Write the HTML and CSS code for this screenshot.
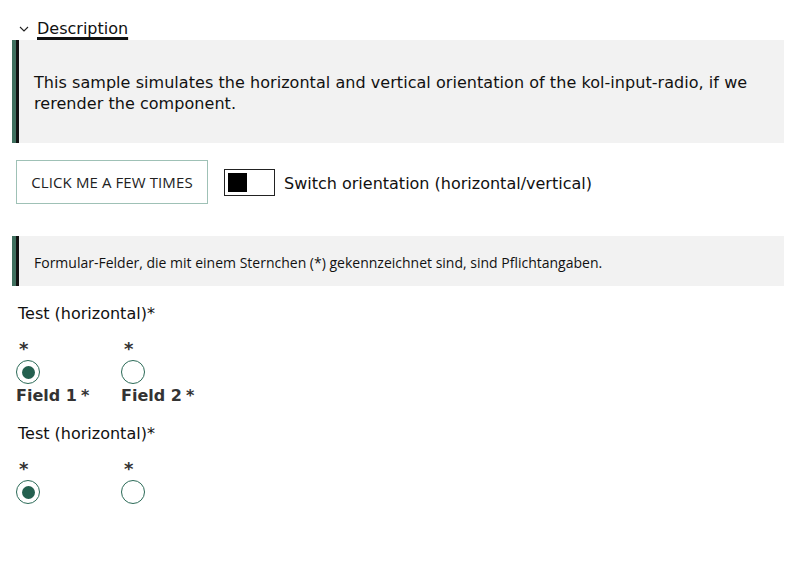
FILE: index.html
```html
<!DOCTYPE html>
<html>
<head>
<meta charset="utf-8">
<link rel="stylesheet" href="styles.css">
</head>
<body>
<div class="page">
  <details class="desc" open>
    <summary class="desc-sum">
      <svg class="chev" width="10" height="6" viewBox="0 0 10 6"><path d="M1 1 L5 5 L9 1" fill="none" stroke="#222" stroke-width="1.1"/></svg>
      <span class="desc-title">Description</span>
    </summary>
    <div class="note note-desc">
      <p>This sample simulates the horizontal and vertical orientation of the kol-input-radio, if we rerender the component.</p>
    </div>
  </details>

  <div class="controls">
    <button class="btn">CLICK ME A FEW TIMES</button>
    <label class="switch">
      <span class="switch-box"><span class="switch-knob"></span></span>
      <span class="switch-label">Switch orientation (horizontal/vertical)</span>
    </label>
  </div>

  <div class="note note-form">
    <p>Formular-Felder, die mit einem Sternchen (*) gekennzeichnet sind, sind Pflichtangaben.</p>
  </div>

  <fieldset class="group">
    <legend class="legend">Test (horizontal)*</legend>
    <div class="options">
      <div class="opt">
        <span class="star">*</span>
        <span class="radio checked"></span>
        <span class="opt-label">Field 1<span class="ostar">*</span></span>
      </div>
      <div class="opt">
        <span class="star">*</span>
        <span class="radio"></span>
        <span class="opt-label">Field 2<span class="ostar">*</span></span>
      </div>
    </div>
  </fieldset>

  <fieldset class="group group2">
    <legend class="legend">Test (horizontal)*</legend>
    <div class="options">
      <div class="opt">
        <span class="star">*</span>
        <span class="radio checked"></span>
      </div>
      <div class="opt">
        <span class="star">*</span>
        <span class="radio"></span>
      </div>
    </div>
  </fieldset>
</div>
</body>
</html>
```
FILE: styles.css
```css
* { box-sizing: border-box; }
html, body { margin: 0; padding: 0; background: #fff; }
body { font-family: "DejaVu Sans", Verdana, sans-serif; color: #111; }
.page { padding: 16px 16px 0 12px; }

.desc { margin: 0; }
.desc-sum {
  list-style: none;
  display: flex;
  align-items: center;
  gap: 8px;
  padding-left: 7px;
  height: 24px;
  cursor: pointer;
}
.desc-sum::-webkit-details-marker { display: none; }
.chev { margin-top: 2px; }
.desc-title {
  font-size: 16px;
  color: #111;
  text-decoration: underline;
  text-decoration-thickness: 3px;
  text-underline-offset: 3px;
  text-decoration-skip-ink: none;
}

.note {
  background: #f2f2f2;
  border-left: 4px solid #3f6f5e;
  box-shadow: inset 3px 0 0 #111;
}
.note p { margin: 0; }
.note-desc {
  height: 103px;
  padding: 32px 20px 0 18px;
  font-size: 16px;
  line-height: 21px;
  letter-spacing: 0.05px;
}

.controls {
  display: flex;
  align-items: center;
  gap: 16px;
  padding-left: 4px;
  margin-top: 17px;
}
.btn {
  width: 192px;
  height: 44px;
  background: #fff;
  border: 1px solid #9fc1b6;
  font-family: "Open Sans", sans-serif;
  font-size: 15px;
  color: #222;
  letter-spacing: 0.1px;
  padding: 0;
}
.switch { display: flex; align-items: center; gap: 9px; }
.switch-box {
  width: 51px;
  height: 27px;
  border: 1px solid #222;
  padding: 3px;
  display: flex;
}
.switch-knob { width: 19px; height: 19px; background: #000; }
.switch-label { font-size: 16px; color: #111; margin-top: 2px; }

.note-form {
  margin-top: 32px;
  height: 50px;
  padding: 2px 10px 0 18px;
  display: flex;
  align-items: center;
  font-family: "Open Sans", sans-serif;
  font-size: 14px;
  color: #111;
}

.group { border: 0; margin: 18px 0 0; padding: 0 0 0 4px; min-width: 0; }
.group2 { margin-top: 19px; }
.legend {
  padding: 0;
  font-size: 16px;
  color: #111;
  margin-left: 2px;
}
.options { display: flex; margin-top: 18px; }
.opt { display: flex; flex-direction: column; align-items: flex-start; width: 105px; }
.star { font-size: 18px; font-weight: bold; color: #333; margin-left: 3px; line-height: 16px; height: 16px; }
.radio {
  width: 24px; height: 24px;
  border: 1px solid #2c6b58;
  border-radius: 50%;
  margin-top: 3px;
  display: flex; align-items: center; justify-content: center;
  background: #fff;
}
.radio.checked::after {
  content: "";
  width: 13px; height: 13px; border-radius: 50%;
  background: #24604f;
}
.opt-label { font-weight: bold; font-size: 16px; color: #333; line-height: 18px; margin-top: 3px; }
.ostar { margin-left: 4px; }
```
